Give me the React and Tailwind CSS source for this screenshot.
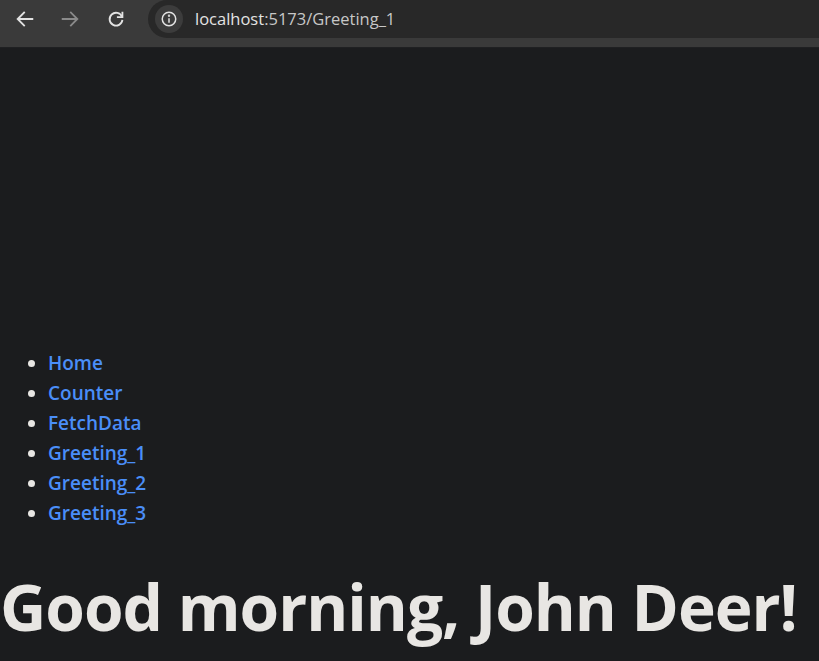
import React from 'react';

const links = ['Home', 'Counter', 'FetchData', 'Greeting_1', 'Greeting_2', 'Greeting_3'];

const BrowserBar = () => (
  <div className="h-[47px] bg-[#3a3a3a] flex items-start">
    <div className="flex items-center h-[38px] pl-[14px] text-[#e3e3e3]">
      {/* back */}
      <svg width="22" height="22" viewBox="0 0 24 24" fill="none" stroke="currentColor" strokeWidth="2" strokeLinecap="square">
        <path d="M20 12H5M11 5l-7 7 7 7" />
      </svg>
      {/* forward (disabled) */}
      <svg className="ml-[23px]" width="22" height="22" viewBox="0 0 24 24" fill="none" stroke="#8a8a8a" strokeWidth="2" strokeLinecap="square">
        <path d="M4 12h15M13 5l7 7-7 7" />
      </svg>
      {/* reload */}
      <svg className="ml-[24px]" width="22" height="22" viewBox="0 0 24 24" fill="none" stroke="currentColor" strokeWidth="2">
        <path d="M18.5 9.5A7 7 0 1 0 19 13" />
        <path d="M19 4v6h-6" fill="none" />
      </svg>
    </div>
    <div className="ml-[21px] flex-1 h-[38px] bg-[#282828] rounded-l-[20px] flex items-center pl-[7px]">
      <div className="w-[28px] h-[28px] rounded-full bg-[#3c3c3c] flex items-center justify-center">
        <svg width="18" height="18" viewBox="0 0 24 24" fill="none" stroke="#e3e3e3" strokeWidth="2">
          <circle cx="12" cy="12" r="9" />
          <path d="M12 11v6" />
          <circle cx="12" cy="7.5" r="0.6" fill="#e3e3e3" />
        </svg>
      </div>
      <div className="ml-[12px] text-[16.5px] font-['Open_Sans',sans-serif] text-[#e3e3e3]">
        localhost<span className="text-[#c7c7c7]">:5173/Greeting_1</span>
      </div>
    </div>
  </div>
);

export default function App() {
  return (
    <div className="w-[819px] h-[661px] overflow-hidden bg-[#1b1c1e] font-['Open_Sans',sans-serif] text-[#e8e6e3]">
      <BrowserBar />
      <div className="h-px bg-[#1f2022]" />
      <div className="pt-[300px]">
        <ul className="list-disc pl-[48px] marker:text-[#e8e6e3] text-[19px] leading-[30px]">
          {links.map((l) => (
            <li key={l}>
              <a className="text-[#4a8ef8] font-semibold" href="#">{l}</a>
            </li>
          ))}
        </ul>
        <h1 className="mt-[44px] text-[64px] leading-[70px] font-bold whitespace-nowrap tracking-[-1px]">
          Good morning, John Deer!
        </h1>
      </div>
    </div>
  );
}
